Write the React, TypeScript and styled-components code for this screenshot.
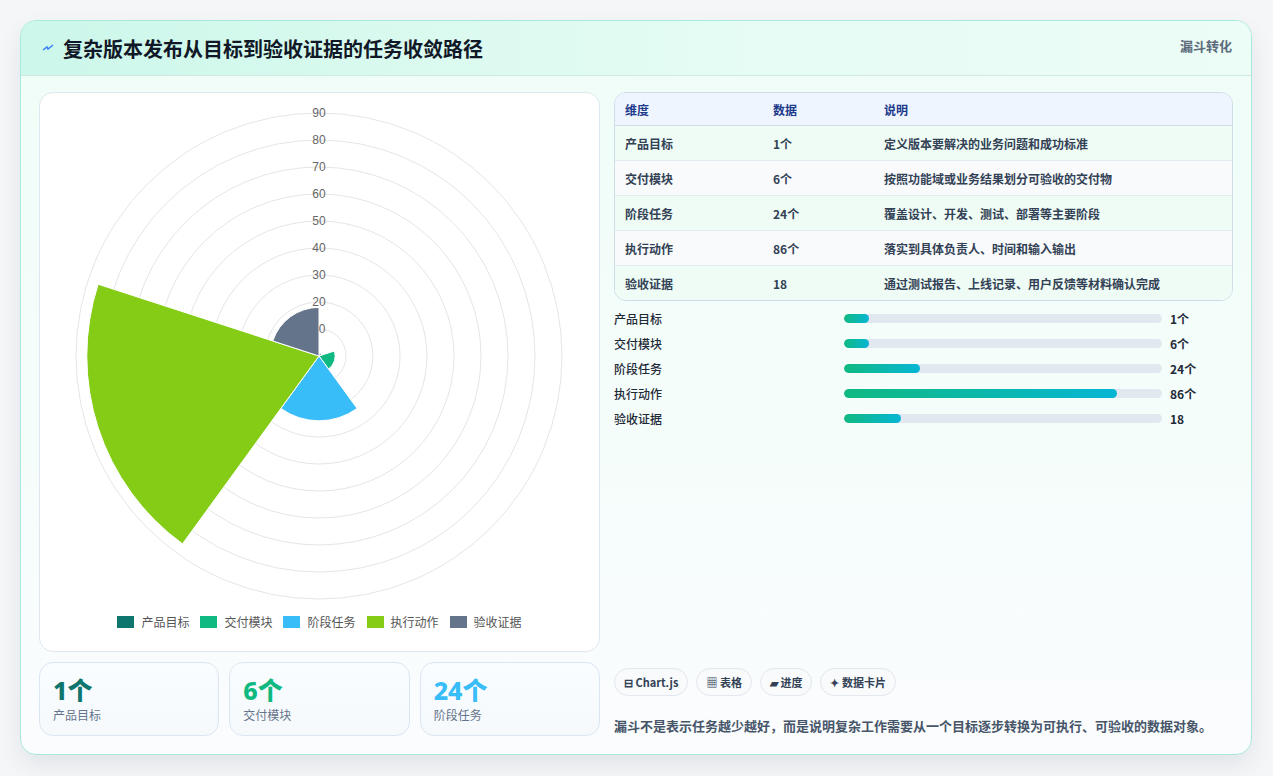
import React from "react";
import styled, { createGlobalStyle } from "styled-components";

const Global = createGlobalStyle`
  html, body { margin: 0; padding: 0; background: #f3f5f7; }
  body { font-family: "Noto Sans CJK SC", "Noto Sans", sans-serif; }
`;

const Page = styled.div`
  width: 1273px; height: 776px; box-sizing: border-box; padding: 20px 21px 21px 20px;
  background: #f4f6f8;
`;
const Card = styled.div`
  height: 735px; box-sizing: border-box; border: 1px solid #a9e8dc; border-radius: 16px;
  background: linear-gradient(180deg, #effdf7 0%, #f5fdfb 60%, #fbfcfe 100%);
  box-shadow: 0 10px 24px rgba(15, 23, 42, 0.08); overflow: hidden; display: flex; flex-direction: column;
`;
const Header = styled.div`
  height: 55px; box-sizing: border-box; padding: 0 19px 0 20px; display: flex; align-items: center; justify-content: space-between;
  background: linear-gradient(90deg, #ccf7ea, #e6fcf4 60%, #ecfcf6); border-bottom: 1px solid #cfe9e4;
`;
const Title = styled.h1`
  margin: 0; font-size: 20px; font-weight: 700; color: #111827; display: flex; align-items: center; gap: 8px;
`;
const Tag = styled.span`font-size: 13px; font-weight: 700; color: #5b6b7b; align-self: flex-start; margin-top: 15px;`;
const Body = styled.div`
  flex: 1; padding: 16px 18px 17px 18px; display: grid; grid-template-columns: 561px 1fr; gap: 14px;
`;
const Col = styled.div`display: flex; flex-direction: column; gap: 10px; min-width: 0;`;
const ChartBox = styled.div`
  height: 560px; box-sizing: border-box; background: #fff; border: 1px solid #dfe7ef; border-radius: 14px;
  display: flex; flex-direction: column; align-items: center;
`;
const Legend = styled.div`display: flex; gap: 11px; margin-top: 0px; font-size: 12px; color: #555;`;
const LegItem = styled.span`display: flex; align-items: center; gap: 7px;`;
const Swatch = styled.span<{ c: string }>`width: 17px; height: 12px; background: ${p => p.c};`;
const Stats = styled.div`display: grid; grid-template-columns: repeat(3, 1fr); gap: 10px;`;
const Stat = styled.div`
  height: 74px; box-sizing: border-box; border: 1px solid #dbe6f2; border-radius: 14px; padding: 11px 13px;
  background: linear-gradient(180deg, #fafdff, #f6f9fc);
`;
const StatNum = styled.div<{ c: string }>`font-size: 25px; font-weight: 800; color: ${p => p.c}; line-height: 32px; font-family: "Noto Sans", "Noto Sans CJK SC", sans-serif;`;
const StatLbl = styled.div`font-size: 12px; color: #64748b; margin-top: 0px;`;
const Table = styled.table`
  width: 100%; border-collapse: separate; border-spacing: 0; border: 1px solid #cfdcea; border-radius: 12px; overflow: hidden;
  font-size: 12px; color: #334155;
  th { text-align: left; background: #eef5ff; color: #1e3a8a; font-weight: 700; height: 32px; padding: 0 10px; border-bottom: 1px solid #cfdcea; }
  td { height: 34px; padding: 0 10px; font-weight: 600; border-bottom: 1px solid #e2eaf2; }
  tr:nth-child(odd) td { background: #effcf5; }
  tr:nth-child(even) td { background: #f8fafc; }
  tr:last-child td { border-bottom: none; }
`;
const Bars = styled.div`display: flex; flex-direction: column; gap: 7px; margin-top: -2px;`;
const BarRow = styled.div`display: grid; grid-template-columns: 222px 318px 1fr; gap: 8px; align-items: center; font-size: 12px; font-weight: 500; color: #1f2937; height: 18px;
  & > span:last-child { font-weight: 700; }
`;
const Track = styled.div`height: 9px; border-radius: 5px; background: #e2e8f0; overflow: hidden;`;
const Fill = styled.div`height: 100%; border-radius: 5px; background: linear-gradient(90deg, #10b981, #06b6d4);`;
const Spacer = styled.div`flex: 1;`;
const Chips = styled.div`display: flex; gap: 8px; margin-bottom: 2px;`;
const Chip = styled.span`
  font-size: 11px; font-weight: 700; color: #334155; border: 1px solid #e2e8f0; background: #f8fafc; border-radius: 14px;
  height: 26px; padding: 0 9px; display: flex; align-items: center; gap: 3px;
`;
const Note = styled.p`margin: 8px 0 2px; font-size: 13px; color: #475569; font-weight: 600;`;

const data = [
  { n: "产品目标", v: 1, s: "1个", c: "#0f766e", d: "定义版本要解决的业务问题和成功标准" },
  { n: "交付模块", v: 6, s: "6个", c: "#10b981", d: "按照功能域或业务结果划分可验收的交付物" },
  { n: "阶段任务", v: 24, s: "24个", c: "#38bdf8", d: "覆盖设计、开发、测试、部署等主要阶段" },
  { n: "执行动作", v: 86, s: "86个", c: "#84cc16", d: "落实到具体负责人、时间和输入输出" },
  { n: "验收证据", v: 18, s: "18", c: "#64748b", d: "通过测试报告、上线记录、用户反馈等材料确认完成" },
];

const CX = 279, CY = 263, UNIT = 2.7;
function wedge(r: number, a0: number, a1: number) {
  const rad = (a: number) => (a * Math.PI) / 180;
  const p = (a: number) => `${CX + r * Math.cos(rad(a))} ${CY + r * Math.sin(rad(a))}`;
  return `M ${CX} ${CY} L ${p(a0)} A ${r} ${r} 0 0 1 ${p(a1)} Z`;
}

function Polar() {
  const ticks = [10, 20, 30, 40, 50, 60, 70, 80, 90];
  return (
    <svg width="559" height="520" viewBox="0 0 559 520">
      {ticks.map(t => <circle key={t} cx={CX} cy={CY} r={t * UNIT} fill="none" stroke="#e5e5e5" />)}
      {data.map((d, i) => (
        <path key={d.n} d={wedge(d.v * UNIT, -90 + i * 72, -18 + i * 72)} fill={d.c} stroke="#fff" strokeWidth="1" />
      ))}
      {ticks.map(t => (
        <text key={t} x={CX} y={CY - t * UNIT + 4} textAnchor="middle" fontSize="12" fill="#666" fontFamily="Liberation Sans, sans-serif">{t === 10 ? "" : t}</text>
      ))}
      <text x={CX + 3} y={CY - 23} textAnchor="middle" fontSize="12" fill="#666" fontFamily="Liberation Sans, sans-serif">0</text>
    </svg>
  );
}

export default function App() {
  return (
    <Page>
      <Global />
      <Card>
        <Header>
          <Title>
            <svg width="14" height="14" viewBox="0 0 14 14"><path d="M2 9 L6 6 L7 8 L12 4" stroke="#3b82f6" strokeWidth="1.5" fill="none" /></svg>
            复杂版本发布从目标到验收证据的任务收敛路径
          </Title>
          <Tag>漏斗转化</Tag>
        </Header>
        <Body>
          <Col>
            <ChartBox>
              <Polar />
              <Legend>
                {data.map(d => <LegItem key={d.n}><Swatch c={d.c} />{d.n}</LegItem>)}
              </Legend>
            </ChartBox>
            <Stats>
              {data.slice(0, 3).map(d => (
                <Stat key={d.n}><StatNum c={d.c}>{d.s}</StatNum><StatLbl>{d.n}</StatLbl></Stat>
              ))}
            </Stats>
          </Col>
          <Col>
            <Table>
              <thead><tr><th style={{ width: 128 }}>维度</th><th style={{ width: 91 }}>数据</th><th>说明</th></tr></thead>
              <tbody>
                {data.map(d => <tr key={d.n}><td>{d.n}</td><td>{d.s}</td><td>{d.d}</td></tr>)}
              </tbody>
            </Table>
            <Bars>
              {data.map(d => (
                <BarRow key={d.n}>
                  <span>{d.n}</span>
                  <Track><Fill style={{ width: `${Math.max(8, (d.v / 100) * 100)}%` }} /></Track>
                  <span>{d.s}</span>
                </BarRow>
              ))}
            </Bars>
            <Spacer />
            <Chips>
              <Chip>⊟ Chart.js</Chip><Chip>▦ 表格</Chip><Chip>▰ 进度</Chip><Chip>✦ 数据卡片</Chip>
            </Chips>
            <Note>漏斗不是表示任务越少越好，而是说明复杂工作需要从一个目标逐步转换为可执行、可验收的数据对象。</Note>
          </Col>
        </Body>
      </Card>
    </Page>
  );
}
